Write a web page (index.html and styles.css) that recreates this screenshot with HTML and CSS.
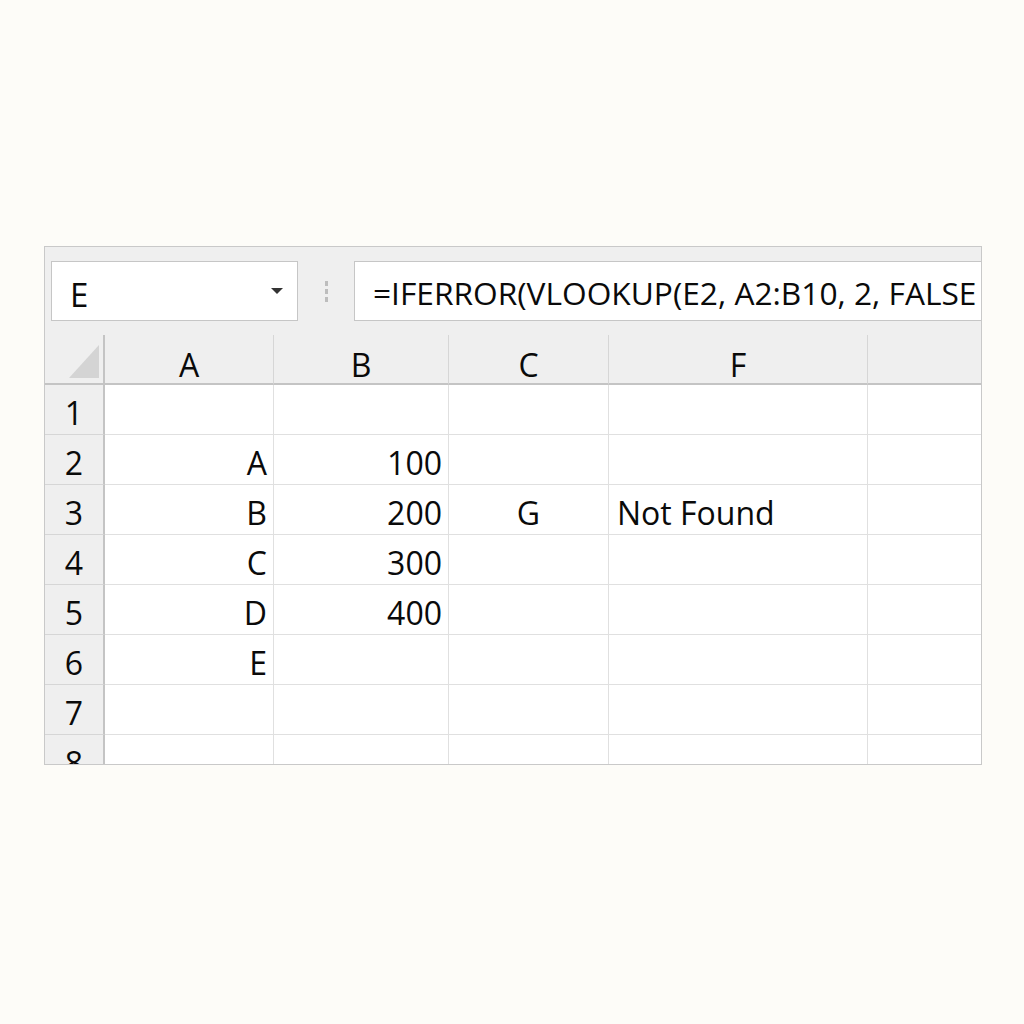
FILE: index.html
```html
<!DOCTYPE html>
<html>
<head>
<meta charset="utf-8">
<link rel="stylesheet" href="styles.css">
</head>
<body>
<div class="window">
  <div class="fbar">
    <div class="namebox"><span class="name">E</span><span class="caret"></span></div>
    <div class="sep"><i></i><i></i><i></i></div>
    <div class="formula">=IFERROR(VLOOKUP(E2, A2:B10, 2, FALSE</div>
  </div>
  <div class="grid">
    <div class="corner"><span class="tri"></span></div>
    <div class="ch">A</div><div class="ch">B</div><div class="ch">C</div><div class="ch">F</div><div class="ch last"></div>

    <div class="rh">1</div><div class="c r"></div><div class="c r"></div><div class="c m"></div><div class="c l"></div><div class="c last"></div>
    <div class="rh">2</div><div class="c r">A</div><div class="c r">100</div><div class="c m"></div><div class="c l"></div><div class="c last"></div>
    <div class="rh">3</div><div class="c r">B</div><div class="c r">200</div><div class="c m">G</div><div class="c l">Not Found</div><div class="c last"></div>
    <div class="rh">4</div><div class="c r">C</div><div class="c r">300</div><div class="c m"></div><div class="c l"></div><div class="c last"></div>
    <div class="rh">5</div><div class="c r">D</div><div class="c r">400</div><div class="c m"></div><div class="c l"></div><div class="c last"></div>
    <div class="rh">6</div><div class="c r">E</div><div class="c r"></div><div class="c m"></div><div class="c l"></div><div class="c last"></div>
    <div class="rh">7</div><div class="c r"></div><div class="c r"></div><div class="c m"></div><div class="c l"></div><div class="c last"></div>
    <div class="rh">8</div><div class="c r"></div><div class="c r"></div><div class="c m"></div><div class="c l"></div><div class="c last"></div>
  </div>
</div>
</body>
</html>
```
FILE: styles.css
```css
html, body {
  margin: 0;
  padding: 0;
  background: #fdfcf8;
}
body {
  padding: 246px 0 0 44px;
  font-family: "Open Sans", "Noto Sans", sans-serif;
  color: #0a0a0a;
}
.window {
  width: 936px;
  height: 517px;
  border: 1px solid #c9c9c9;
  background: #fff;
  overflow: hidden;
}
.fbar {
  height: 88px;
  background: #efefef;
  display: flex;
  align-items: center;
  padding-left: 6px;
}
.namebox {
  width: 247px;
  height: 60px;
  background: #fff;
  border: 1px solid #c6c6c6;
  display: flex;
  align-items: center;
  justify-content: space-between;
  box-sizing: border-box;
  padding-top: 6px;
}
.name {
  font-size: 33px;
  padding-left: 18px;
}
.caret {
  width: 0;
  height: 0;
  border-left: 6px solid transparent;
  border-right: 6px solid transparent;
  border-top: 6px solid #333;
  margin-right: 14px;
  margin-top: -6px;
}
.sep {
  width: 56px;
  display: flex;
  flex-direction: column;
  align-items: center;
  gap: 3px;
}
.sep i {
  display: block;
  width: 3px;
  height: 5px;
  background: #bdbdbd;
}
.formula {
  flex: 1;
  height: 60px;
  background: #fff;
  border: 1px solid #c6c6c6;
  border-right: none;
  font-size: 31.7px;
  display: flex;
  align-items: center;
  padding-left: 18px;
  padding-top: 2px;
  box-sizing: border-box;
  white-space: nowrap;
  overflow: hidden;
}
.grid {
  display: grid;
  grid-template-columns: 60px 169px 175px 160px 259px 113px;
  grid-auto-rows: 50px;
  grid-template-rows: 50px;
}
.corner {
  background: #efefef;
  border-right: 2px solid #c4c4c4;
  border-bottom: 2px solid #c4c4c4;
  position: relative;
}
.tri {
  position: absolute;
  left: 24px;
  top: 10px;
  width: 0;
  height: 0;
  border-left: 30px solid transparent;
  border-bottom: 33px solid #d4d4d4;
}
.ch {
  background: #efefef;
  border-bottom: 2px solid #c4c4c4;
  border-right: 1px solid #d6d6d6;
  display: flex;
  align-items: center;
  justify-content: center;
  font-size: 32px;
  padding-top: 11px;
  box-sizing: border-box;
}
.rh {
  background: #efefef;
  border-right: 2px solid #c4c4c4;
  border-bottom: 1px solid #d6d6d6;
  display: flex;
  align-items: center;
  justify-content: center;
  font-size: 32px;
  padding-top: 6px;
  box-sizing: border-box;
}
.c {
  border-right: 1px solid #e0e0e0;
  border-bottom: 1px solid #e0e0e0;
  display: flex;
  align-items: center;
  font-size: 32px;
  padding-top: 6px;
  box-sizing: border-box;
  white-space: nowrap;
}
.c.r { justify-content: flex-end; padding-right: 6px; }
.c.m { justify-content: center; }
.c.l { justify-content: flex-start; padding-left: 8px; }
.last { border-right: none; }
```
